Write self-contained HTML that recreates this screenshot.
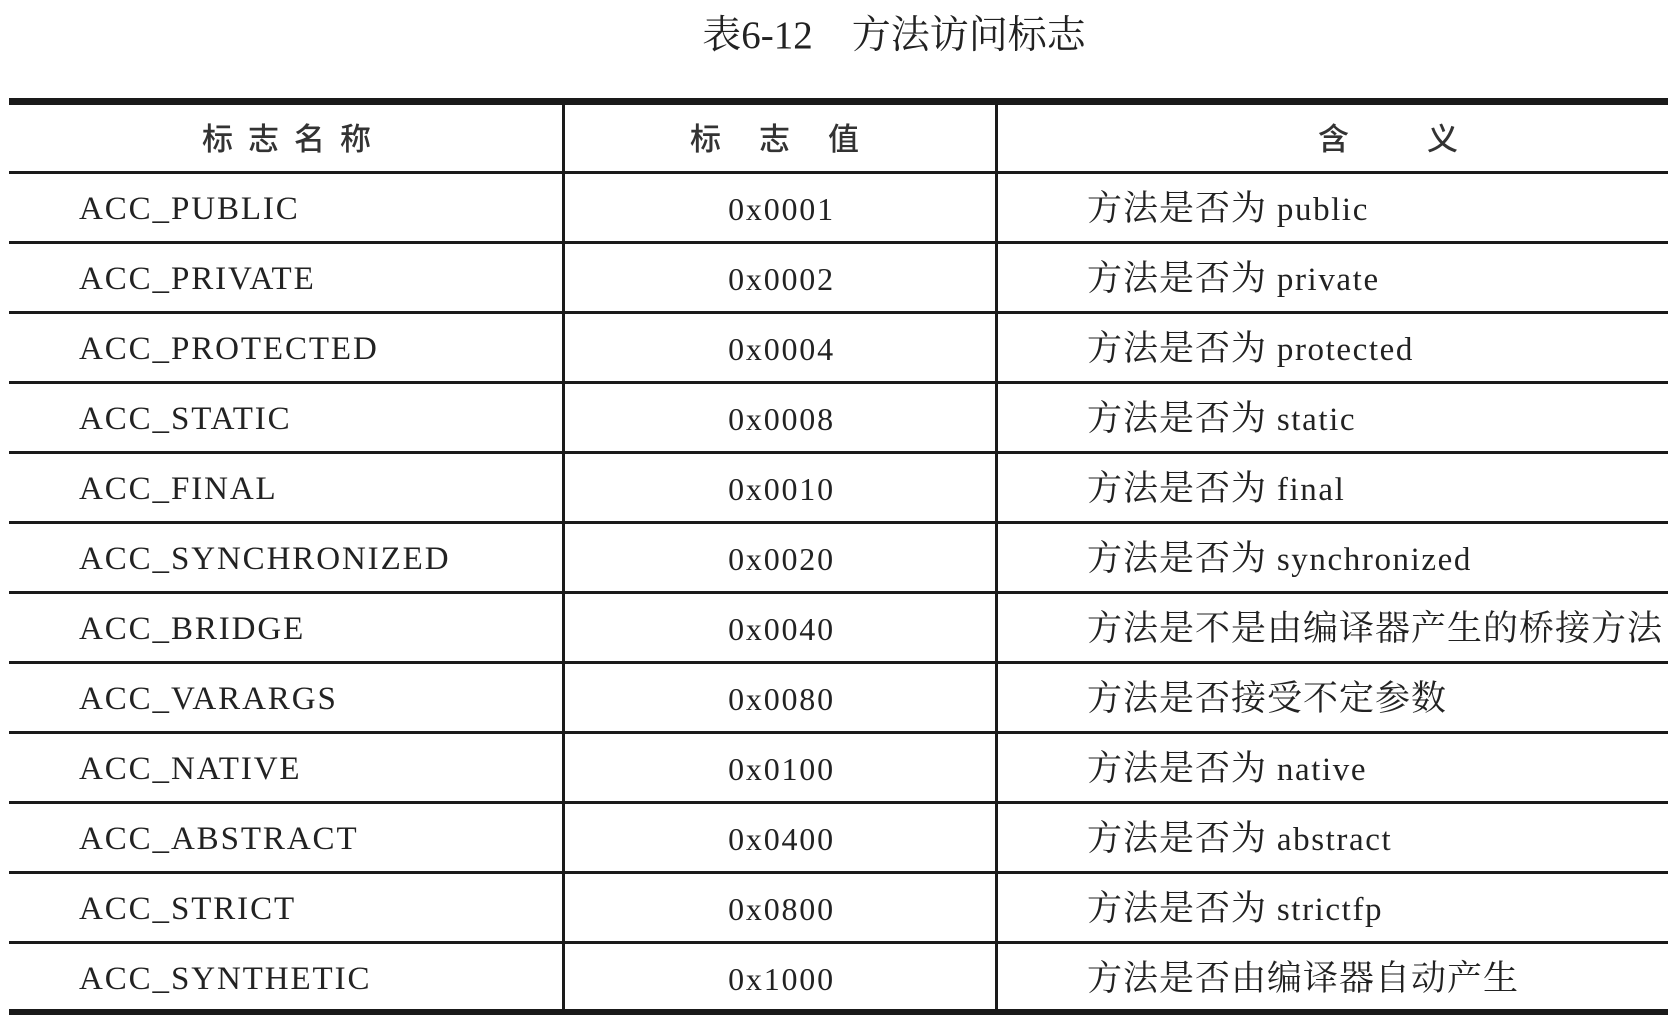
<!DOCTYPE html>
<html><head><meta charset="utf-8"><style>
body{margin:0;width:1668px;height:1029px;background:#fff;position:relative;overflow:hidden;font-family:"Liberation Serif","Noto Serif CJK SC",serif;color:#222}
.t{position:absolute;white-space:nowrap}
.h{position:absolute;left:9px;right:0;background:#1a1a1a}
.v{position:absolute;width:3px;background:#1a1a1a;top:100px;height:914px}
.c1,.c2,.c3{position:absolute;height:70px;line-height:70px;white-space:nowrap}
.c1{left:79px;font-size:33px;letter-spacing:1.9px}
.c2{left:566px;width:431px;text-align:center;font-size:32px;letter-spacing:1.8px}
.c3{left:1087px;font-size:33px;letter-spacing:1.6px}
.c3 b{font-weight:normal;font-size:35px;letter-spacing:1px}
.hd{position:absolute;top:102px;height:70px;line-height:70px;font-family:"Noto Sans CJK SC",sans-serif;font-size:31px;font-weight:500;color:#333;white-space:nowrap}
</style></head><body>
<div class="t" style="left:0;width:1788px;text-align:center;top:4px;font-size:39px;font-family:'Liberation Serif','Noto Serif CJK SC',serif">表6-12　方法访问标志</div>
<div class="h" style="top:98px;height:7px"></div>
<div class="h" style="top:1009px;height:6px"></div>
<div class="v" style="left:562px"></div>
<div class="v" style="left:995px"></div>
<div class="hd" style="left:202px;letter-spacing:15px">标志名称</div>
<div class="hd" style="left:690px;letter-spacing:38px">标志值</div>
<div class="hd" style="left:1318px;letter-spacing:78px">含义</div>
<div id="rows"></div>
<script>
var d=[["ACC_PUBLIC","0x0001","方法是否为 public"],["ACC_PRIVATE","0x0002","方法是否为 private"],["ACC_PROTECTED","0x0004","方法是否为 protected"],["ACC_STATIC","0x0008","方法是否为 static"],["ACC_FINAL","0x0010","方法是否为 final"],["ACC_SYNCHRONIZED","0x0020","方法是否为 synchronized"],["ACC_BRIDGE","0x0040","方法是不是由编译器产生的桥接方法"],["ACC_VARARGS","0x0080","方法是否接受不定参数"],["ACC_NATIVE","0x0100","方法是否为 native"],["ACC_ABSTRACT","0x0400","方法是否为 abstract"],["ACC_STRICT","0x0800","方法是否为 strictfp"],["ACC_SYNTHETIC","0x1000","方法是否由编译器自动产生"]];
var h='';
h+='<div class="h" style="top:171px;height:3px"></div>';
for(var i=0;i<12;i++){var y=172+i*70;
if(i<11)h+='<div class="h" style="top:'+(y+69)+'px;height:3px"></div>';
var ty=y+2;
var s=d[i][2].replace(/^([^ a-z]+)/,'<b>$1</b>');
h+='<div class="c1" style="top:'+ty+'px">'+d[i][0]+'</div><div class="c2" style="top:'+ty+'px">'+d[i][1]+'</div><div class="c3" style="top:'+ty+'px">'+s+'</div>';}
document.getElementById('rows').innerHTML=h;
</script>
</body></html>
